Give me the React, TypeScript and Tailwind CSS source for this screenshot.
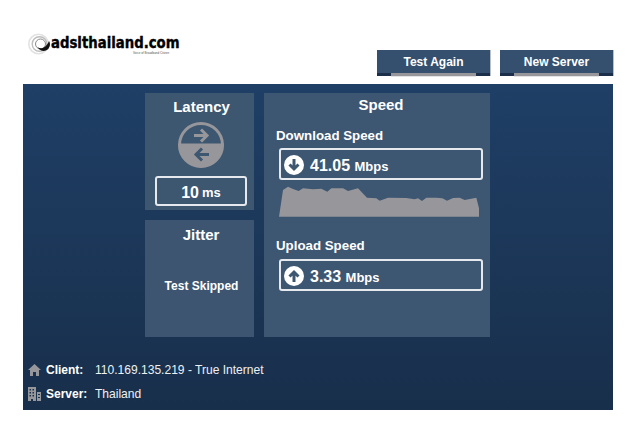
const font = "[font-family:'Liberation_Sans',Arial,sans-serif]";

function ActionButton({ label }: { label: string }) {
  return (
    <div className="flex h-[26px] w-[113px] flex-col bg-[#34506e] shadow-[1px_0_0_#b9c0c8]">
      <div className="flex flex-1 items-center justify-center pt-px text-xs font-bold text-white">{label}</div>
      <div className="flex h-[3px] justify-center bg-[#1b2f4b]">
        <div className="h-full w-[85px] bg-[#97969b] shadow-[0_1px_0_#e3e3e5]" />
      </div>
    </div>
  );
}

function Logo() {
  return (
    <div className="flex items-center">
      <svg width="23" height="22" viewBox="0 0 23 22" className="shrink-0">
        <circle cx="10.500" cy="11" r="9.700" fill="none" stroke="#e2e2e2" strokeWidth="1.600" />
        <circle cx="11.500" cy="11" r="7.300" fill="none" stroke="#bdbdbd" strokeWidth="1.400" />
        <circle cx="12.500" cy="11" r="5" fill="none" stroke="#8a8a8a" strokeWidth="1" />
        <path d="M21 8a6.500 6.500 0 1 1-11.500 6c3 2.500 8.500 1.500 11.500-6z" fill="#111" />
      </svg>
      <div className="flex min-w-0 flex-col pt-[3px]">
        <div className="origin-left scale-x-[0.885] text-[15px] leading-[15px] font-bold whitespace-nowrap text-black [-webkit-text-stroke:0.4px_#000] [font-family:'DejaVu_Sans',sans-serif]">
          adslthailand.com
        </div>
        <div className="pl-[82px] text-[3px] leading-[4px] whitespace-nowrap text-[#555]">Voice of Broadband Citizen</div>
      </div>
    </div>
  );
}

function LatencyIcon() {
  return (
    <svg width="46" height="46" viewBox="0 0 46 46">
      <circle cx="23" cy="23" r="21.500" fill="none" stroke="#97969b" strokeWidth="3" />
      <path d="M0.500 21.500h45v1.500a22.500 22.500 0 0 1-45 0z" fill="#97969b" />
      <path d="M16 13.500h13M23 7.500l6 6-6 6" fill="none" stroke="#97969b" strokeWidth="3" />
      <path d="M31 32.500h-13M24 26.500l-6 6 6 6" fill="none" stroke="#3d5771" strokeWidth="3" />
    </svg>
  );
}

function ArrowBadge({ up }: { up?: boolean }) {
  return (
    <svg width="20" height="20" viewBox="0 0 20 20" className="shrink-0">
      <circle cx="10" cy="10" r="10" fill="#fff" />
      <path
        d={up ? "M10 16V6M5.500 10.500L10 6l4.500 4.500" : "M10 4v10M5.500 9.500L10 14l4.500-4.500"}
        fill="none"
        stroke="#3d5771"
        strokeWidth="3"
      />
    </svg>
  );
}

function SpeedBox({ value, up }: { value: string; up?: boolean }) {
  return (
    <div className="flex h-[32px] w-[204px] items-center gap-[6px] rounded-[3px] border-2 border-[#e6e9ed] pt-px pl-[3px] text-white">
      <ArrowBadge up={up} />
      <div className="pt-[2px] font-bold">
        <span className="text-base">{value}</span> <span className="text-[13px]">Mbps</span>
      </div>
    </div>
  );
}

function Sparkline() {
  return (
    <svg width="200" height="32" viewBox="58 435 600 96" className="mt-[5px] block">
      <path
        d="M58 530L70 450L85 440L100 447L117 453L130 445L160 448L185 446L203 455L215 445L250 445L265 453L295 445L322 473L350 475L360 482L385 473L440 474L465 478L475 475L487 483L500 473L530 473L548 475L562 482L580 474L600 473L615 480L650 473L658 505L658 530Z"
        fill="#97969b"
      />
    </svg>
  );
}

function InfoRow({ icon, label, value }: { icon: React.ReactNode; label: string; value: string }) {
  return (
    <div className="flex h-6 items-center text-xs text-white">
      <div className="flex w-[18px] shrink-0 items-center">{icon}</div>
      <div className="w-[49px] shrink-0 font-bold">{label}</div>
      <div className="text-[12.050px] text-[#eef1f4]">{value}</div>
    </div>
  );
}

const HomeIcon = (
  <svg width="13" height="12" viewBox="0 0 13 12">
    <path d="M6.500 0L13 6h-2v6H8V8H5v4H2V6H0z" fill="#97969b" />
  </svg>
);

const BuildingIcon = (
  <svg width="13" height="14" viewBox="0 0 13 14">
    <path
      fillRule="evenodd"
      d="M0 0h8v14H5v-2H3v2H0zM1.500 2v1.500H3V2zM4.500 2v1.500H6V2zM1.500 5v1.500H3V5zM4.500 5v1.500H6V5zM1.500 8v1.500H3V8zM4.500 8v1.500H6V8zM9 5h4v9H9zM10 7v1h2V7zM10 10v1h2v-1z"
      fill="#97969b"
    />
  </svg>
);

export default function App() {
  return (
    <div className={`${font} h-[433px] w-[632px] overflow-hidden bg-white`}>
      <div className="flex h-[84px] w-[613px] justify-between pl-[28px]">
        <div className="w-[160px] pt-[33px]">
          <Logo />
        </div>
        <div className="flex gap-[10px] pt-[50px]">
          <ActionButton label="Test Again" />
          <ActionButton label="New Server" />
        </div>
      </div>

      <div className="ml-[23px] h-[326px] w-[590px] bg-gradient-to-b from-[#1f3f66] to-[#182f4b] pt-[9px]">
        <div className="flex justify-center gap-[10px] pr-px">
          <div className="flex w-[109px] flex-col gap-[10px]">
            <div className="flex h-[117px] flex-col items-center bg-[#3d5771] pt-[5px] pl-[3px]">
              <div className="pl-px text-[15px] leading-[18px] font-bold text-white">Latency</div>
              <div className="mt-[6px]">
                <LatencyIcon />
              </div>
              <div className="mt-[8px] flex h-[30px] w-[92px] items-center justify-center gap-[3px] rounded-[3px] border-2 border-[#e6e9ed] pt-[3px] font-bold text-white">
                <span className="text-base">10</span>
                <span className="text-[13px]">ms</span>
              </div>
            </div>
            <div className="flex h-[117px] flex-col items-center bg-[#3d5570] pt-[6px] pl-[3px]">
              <div className="text-[15px] leading-[18px] font-bold text-white">Jitter</div>
              <div className="mt-[34px] pl-px text-xs font-bold text-white">Test Skipped</div>
            </div>
          </div>

          <div className="h-[244px] w-[226px] bg-[#3d5672] pt-[3px]">
            <div className="pl-[8px] text-center text-[15px] leading-[18px] font-bold text-white">Speed</div>
            <div className="mt-[14px] pl-[12px] text-[13.300px] leading-[16px] font-bold text-white">Download Speed</div>
            <div className="mt-[4px] ml-[15px]">
              <SpeedBox value="41.05" />
              <Sparkline />
            </div>
            <div className="mt-[21px] pl-[12px] text-[13.300px] leading-[16px] font-bold text-white">Upload Speed</div>
            <div className="mt-[5px] ml-[15px]">
              <SpeedBox value="3.33" up />
            </div>
          </div>
        </div>

        <div className="mt-[21px] pl-[5px]">
          <InfoRow icon={HomeIcon} label="Client:" value="110.169.135.219 - True Internet" />
          <InfoRow icon={BuildingIcon} label="Server:" value="Thailand" />
        </div>
      </div>
    </div>
  );
}
